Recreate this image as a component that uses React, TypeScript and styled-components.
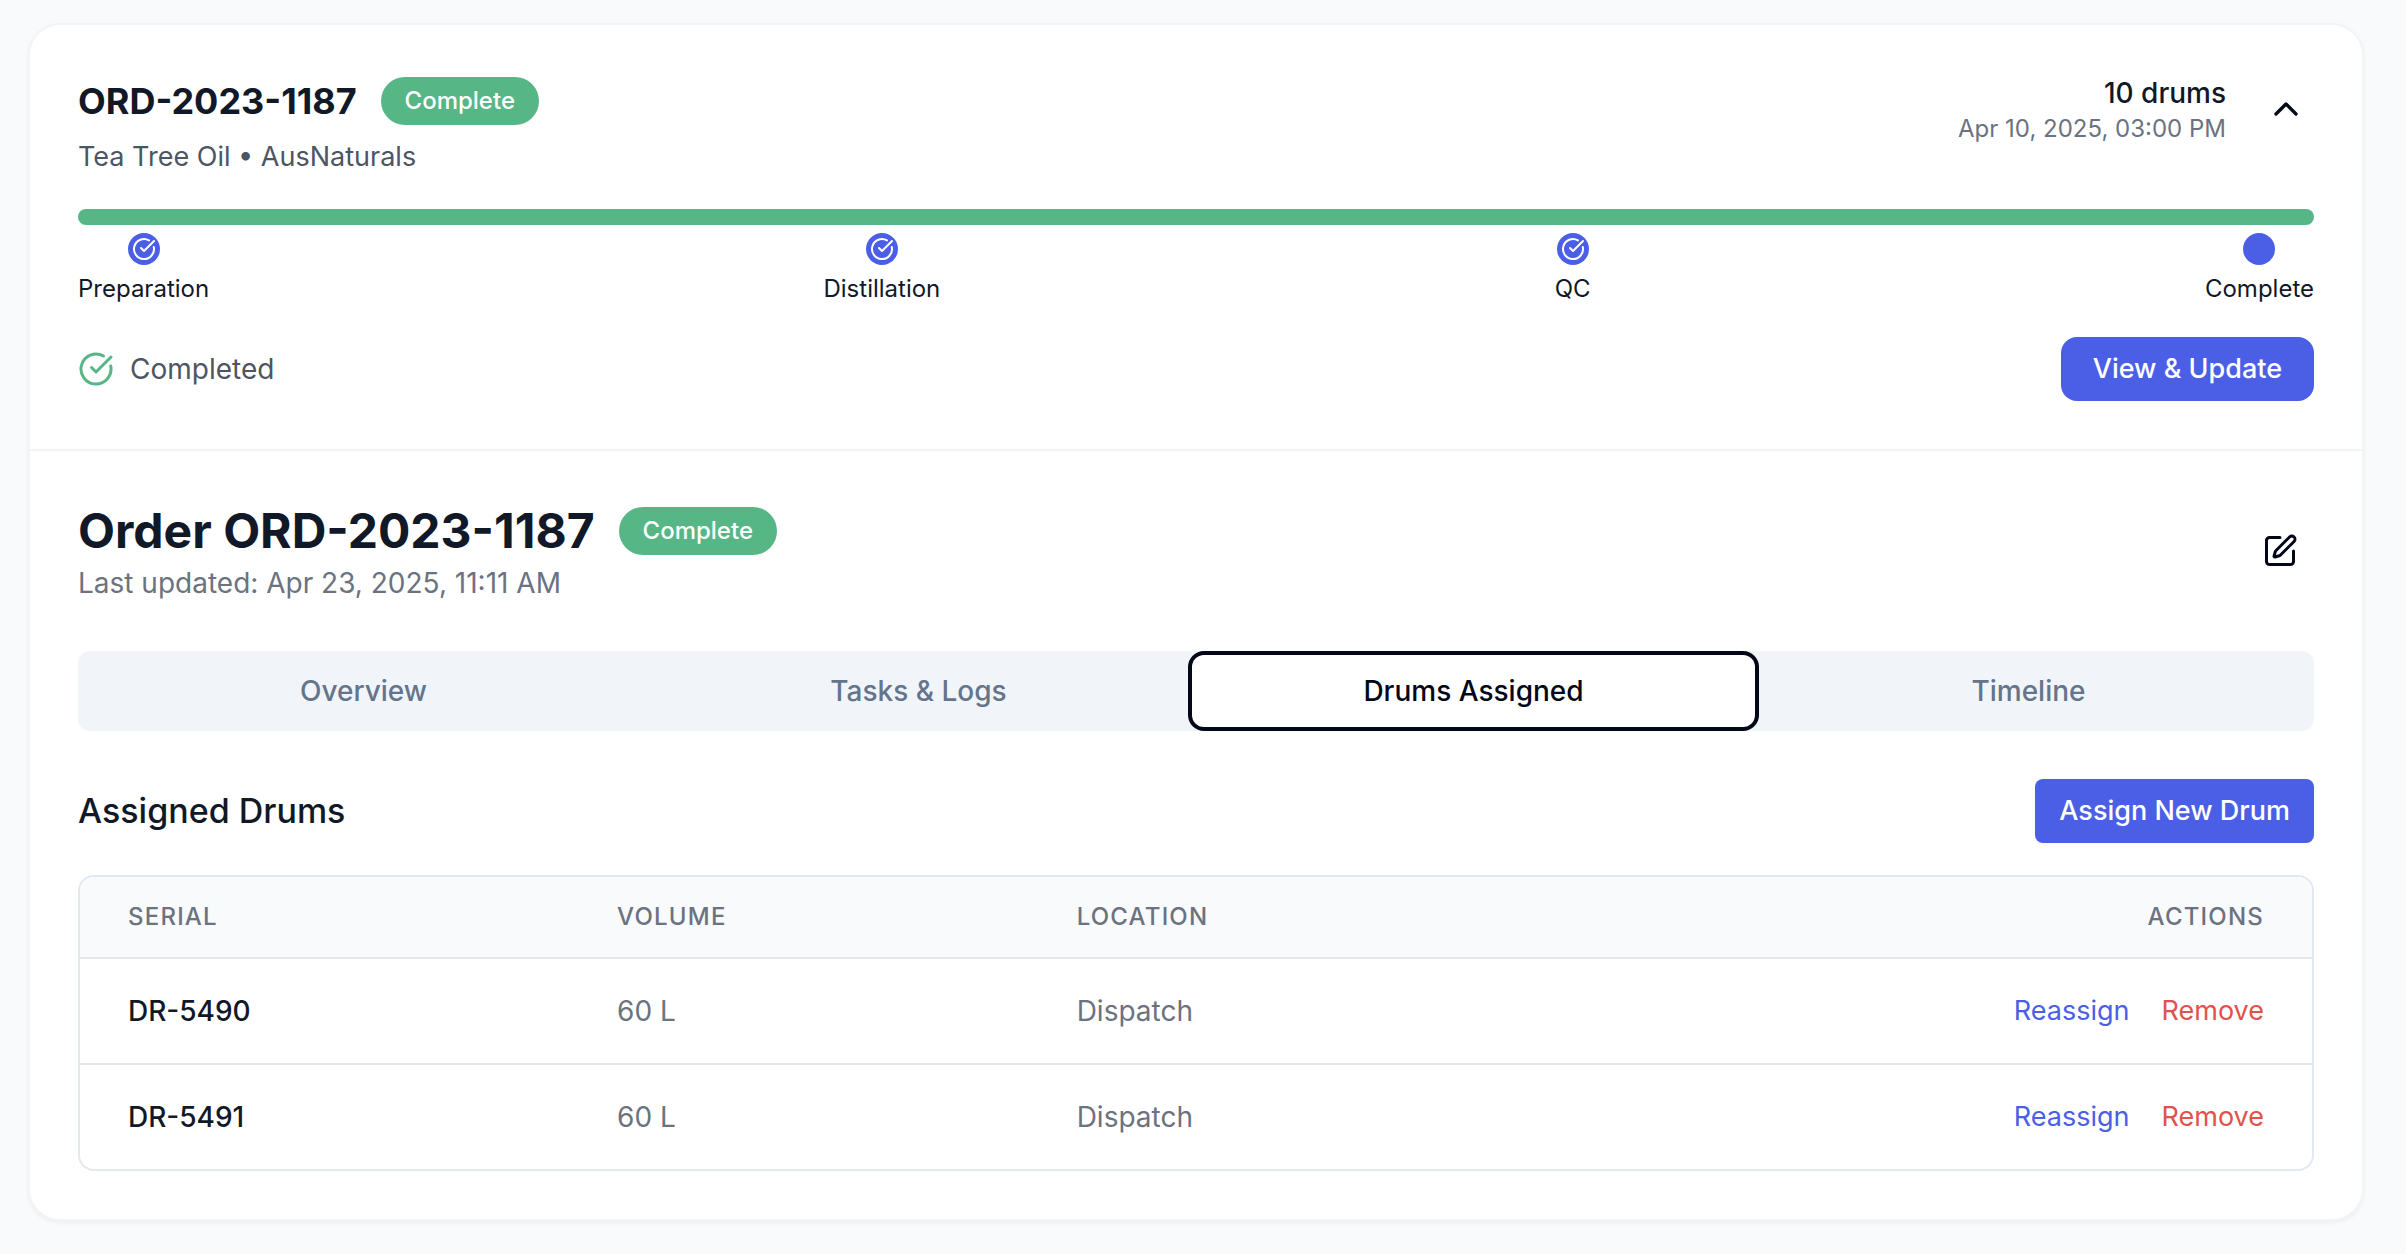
import React from "react";
import styled, { createGlobalStyle, css } from "styled-components";
import { ChevronUp, CircleCheckBig, SquarePen } from "lucide-react";

const color = {
  page: "#f9fafc",
  card: "#ffffff",
  hairline: "#f3f4f6",
  line: "#e2e8f0",
  rowLine: "#e5e7eb",
  ink: "#111827",
  inkStrong: "#020817",
  body: "#4b5563",
  muted: "#6b7280",
  tab: "#64748b",
  tabTrack: "#f1f5f9",
  green: "#56b686",
  blue: "#4a5fe6",
  red: "#e0524b",
};

const GlobalStyle = createGlobalStyle`
  *, *::before, *::after { box-sizing: border-box; }
  body {
    margin: 0;
    background: ${color.page};
    color: ${color.inkStrong};
    font-family: Inter, "Liberation Sans", sans-serif;
    font-size: 28px;
    line-height: 40px;
    -webkit-font-smoothing: antialiased;
  }
  h2, h3, h4, p { margin: 0; }
  button { font: inherit; color: inherit; border: 0; background: none; padding: 0; cursor: pointer; }
`;

const Page = styled.main`
  padding: 23px 42px 32px 28px;
`;

const Card = styled.article`
  background: ${color.card};
  border: 2px solid ${color.hairline};
  border-radius: 32px;
  box-shadow: 0 2px 4px rgba(0, 0, 0, 0.05);
`;

const Section = styled.section<{ $divided?: boolean }>`
  padding: 48px;
  ${(p) => p.$divided && css`border-top: 2px solid ${color.hairline};`}
`;

const Row = styled.div<{ $align?: string }>`
  display: flex;
  justify-content: space-between;
  align-items: ${(p) => p.$align ?? "center"};
`;

const TitleLine = styled.div`
  display: flex;
  align-items: center;
  gap: 24px;
`;

const OrderTitle = styled.h3`
  font-size: 36px;
  line-height: 56px;
  font-weight: 700;
  color: ${color.ink};
`;

const DetailTitle = styled.h2`
  font-size: 48px;
  line-height: 64px;
  font-weight: 700;
  color: ${color.ink};
`;

const Badge = styled.span`
  padding: 8px 24px;
  border-radius: 24px;
  background: ${color.green};
  color: #fff;
  font-size: 24px;
  line-height: 32px;
  font-weight: 500;
`;

const Product = styled.p`
  margin-top: 8px;
  font-size: 27px;
  color: ${color.body};
`;

const Updated = styled.p`
  color: ${color.muted};
`;

const Summary = styled.div`
  display: flex;
  align-items: center;
  gap: 32px;
  text-align: right;
`;

const Count = styled.p`
  font-weight: 500;
  color: ${color.ink};
`;

const DateText = styled.p`
  font-size: 24px;
  line-height: 32px;
  color: ${color.muted};
`;

const IconButton = styled.button<{ $pad: number }>`
  && {
    display: inline-flex;
    padding: ${(p) => p.$pad}px;
    border-radius: 12px;
  }
`;

const Progress = styled.div`
  margin-top: 32px;
  height: 16px;
  border-radius: 8px;
  background: ${color.green};
`;

const Steps = styled.ol`
  display: flex;
  justify-content: space-between;
  margin: 8px 0 0;
  padding: 0;
  list-style: none;
`;

const Step = styled.li`
  display: flex;
  flex-direction: column;
  align-items: center;
  gap: 8px;
  font-size: 24px;
  line-height: 32px;
  color: ${color.ink};
`;

const StepDot = styled.span`
  display: flex;
  align-items: center;
  justify-content: center;
  width: 32px;
  height: 32px;
  border-radius: 50%;
  background: ${color.blue};
  color: #fff;
`;

const Footer = styled(Row)`
  margin-top: 32px;
`;

const Status = styled.div`
  display: flex;
  align-items: center;
  gap: 16px;
  color: ${color.body};

  svg { color: ${color.green}; }
`;

const PrimaryButton = styled.button<{ $pad: number; $radius: number }>`
  && {
    padding: 12px ${(p) => p.$pad}px;
    border-radius: ${(p) => p.$radius}px;
    background: ${color.blue};
    color: #fff;
    font-size: 27px;
    font-weight: 500;
  }
`;

const Tabs = styled.div`
  display: grid;
  grid-template-columns: repeat(4, 1fr);
  margin: 48px 0;
  padding: 8px;
  border-radius: 12px;
  background: ${color.tabTrack};
`;

const Tab = styled.button<{ $active: boolean }>`
  && {
    padding: 12px 24px;
    border-radius: 8px;
    font-weight: 500;
    color: ${(p) => (p.$active ? color.inkStrong : color.tab)};
    ${(p) =>
      p.$active &&
      css`
        background: ${color.card};
        box-shadow: 0 0 0 4px ${color.card}, 0 0 0 8px ${color.inkStrong};
      `}
  }
`;

const PanelTitle = styled.h4`
  font-size: 34px;
  line-height: 56px;
  font-weight: 500;
  color: ${color.ink};
`;

const TableFrame = styled.div`
  margin-top: 32px;
  border: 2px solid ${color.line};
  border-radius: 16px;
  overflow: hidden;
`;

const Table = styled.table`
  width: 100%;
  border-collapse: separate;
  border-spacing: 0;

  th, td { text-align: left; white-space: nowrap; }
  th:last-child, td:last-child { text-align: right; }
`;

const HeadCell = styled.th`
  padding: 24px 48px;
  background: ${color.page};
  color: ${color.muted};
  font-size: 24px;
  line-height: 32px;
  font-weight: 500;
  letter-spacing: 0.05em;
  text-transform: uppercase;
`;

const Cell = styled.td<{ $strong?: boolean }>`
  padding: 32px 48px;
  border-top: 2px solid ${color.rowLine};
  color: ${(p) => (p.$strong ? color.ink : color.muted)};
  font-weight: ${(p) => (p.$strong ? 500 : 400)};
`;

const Actions = styled.div`
  display: flex;
  justify-content: flex-end;
  gap: 32px;
`;

const TextButton = styled.button<{ $tone: "blue" | "red" }>`
  && {
    font-size: 27px;
    color: ${(p) => color[p.$tone]};
  }
`;

const steps = [
  { label: "Preparation", done: true },
  { label: "Distillation", done: true },
  { label: "QC", done: true },
  { label: "Complete", done: false },
];

const tabs = ["Overview", "Tasks & Logs", "Drums Assigned", "Timeline"];

const drums = [
  { serial: "DR-5490", volume: "60 L", location: "Dispatch" },
  { serial: "DR-5491", volume: "60 L", location: "Dispatch" },
];

export default function App() {
  const [active, setActive] = React.useState("Drums Assigned");
  return (
    <Page>
      <GlobalStyle />
      <Card>
        <Section>
          <Row $align="flex-start">
            <div>
              <TitleLine>
                <OrderTitle>ORD-2023-1187</OrderTitle>
                <Badge>Complete</Badge>
              </TitleLine>
              <Product>Tea Tree Oil • AusNaturals</Product>
            </div>
            <Summary>
              <div>
                <Count>10 drums</Count>
                <DateText>Apr 10, 2025, 03:00 PM</DateText>
              </div>
              <IconButton $pad={8} aria-label="Collapse order">
                <ChevronUp size={40} />
              </IconButton>
            </Summary>
          </Row>
          <Progress role="progressbar" aria-label="Order progress" aria-valuenow={100} />
          <Steps>
            {steps.map((s) => (
              <Step key={s.label}>
                <StepDot>{s.done && <CircleCheckBig size={24} />}</StepDot>
                {s.label}
              </Step>
            ))}
          </Steps>
          <Footer>
            <Status>
              <CircleCheckBig size={36} />
              <span>Completed</span>
            </Status>
            <PrimaryButton $pad={32} $radius={16}>View &amp; Update</PrimaryButton>
          </Footer>
        </Section>
        <Section $divided>
          <Row>
            <div>
              <TitleLine>
                <DetailTitle>Order ORD-2023-1187</DetailTitle>
                <Badge>Complete</Badge>
              </TitleLine>
              <Updated>Last updated: Apr 23, 2025, 11:11 AM</Updated>
            </div>
            <IconButton $pad={16} aria-label="Edit order">
              <SquarePen size={36} />
            </IconButton>
          </Row>
          <Tabs role="tablist">
            {tabs.map((t) => (
              <Tab
                key={t}
                role="tab"
                aria-selected={t === active}
                $active={t === active}
                onClick={() => setActive(t)}
              >
                {t}
              </Tab>
            ))}
          </Tabs>
          <Row>
            <PanelTitle>Assigned Drums</PanelTitle>
            <PrimaryButton $pad={24} $radius={8}>Assign New Drum</PrimaryButton>
          </Row>
          <TableFrame>
            <Table>
              <thead>
                <tr>
                  <HeadCell scope="col">Serial</HeadCell>
                  <HeadCell scope="col">Volume</HeadCell>
                  <HeadCell scope="col">Location</HeadCell>
                  <HeadCell scope="col">Actions</HeadCell>
                </tr>
              </thead>
              <tbody>
                {drums.map((d) => (
                  <tr key={d.serial}>
                    <Cell $strong>{d.serial}</Cell>
                    <Cell>{d.volume}</Cell>
                    <Cell>{d.location}</Cell>
                    <Cell>
                      <Actions>
                        <TextButton $tone="blue">Reassign</TextButton>
                        <TextButton $tone="red">Remove</TextButton>
                      </Actions>
                    </Cell>
                  </tr>
                ))}
              </tbody>
            </Table>
          </TableFrame>
        </Section>
      </Card>
    </Page>
  );
}
